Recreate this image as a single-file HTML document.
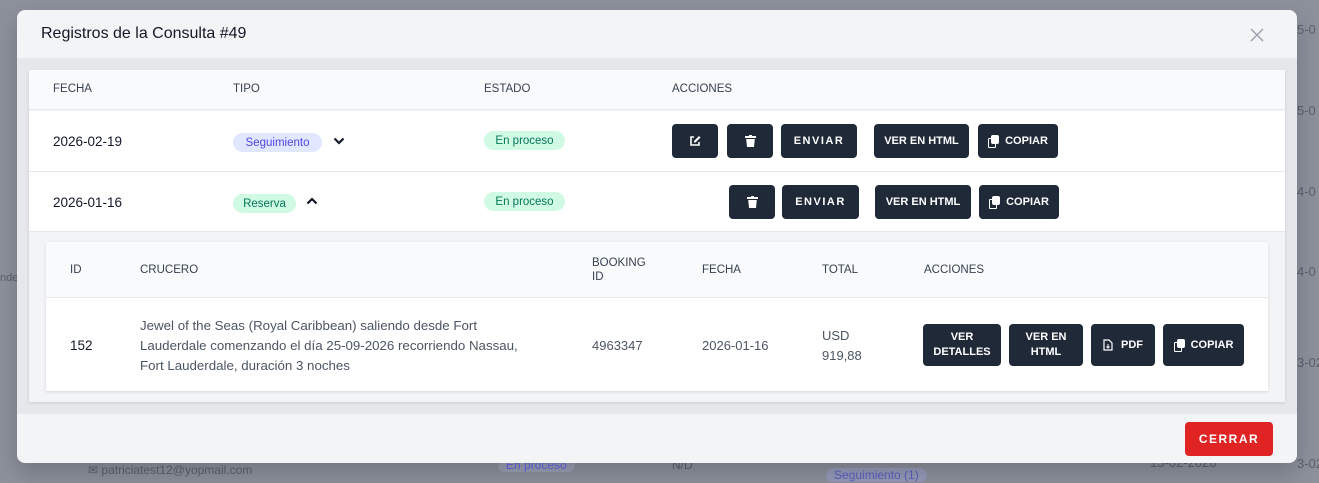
<!DOCTYPE html>
<html><head><meta charset="utf-8"><style>
*{box-sizing:border-box;margin:0;padding:0}
html,body{width:1319px;height:483px;overflow:hidden}
body{background:#8d919c;font-family:"Liberation Sans",sans-serif;position:relative;color:#111827}
.a{position:absolute;white-space:nowrap}
.bg{color:#5b6170;font-size:13px}
.m{left:17px;top:10px;width:1280px;height:453px;background:#f3f4f6;border-radius:8px;overflow:hidden;box-shadow:0 10px 25px rgba(0,0,0,.2)}
.th{font-size:11.5px;color:#374151;font-weight:500}
.btn{position:absolute;background:#1f2937;color:#fff;border-radius:4px;font-size:11px;font-weight:bold;display:flex;align-items:center;justify-content:center;text-align:center;line-height:15px;white-space:nowrap}
.badge{position:absolute;height:19px;border-radius:10px;font-size:11.5px;display:flex;align-items:center;justify-content:center}
.td{font-size:13.5px}
.gr{color:#4b5563;font-size:13px}
.cp{display:inline-block;width:11px;height:12px;position:relative;margin-right:6px}
.cp:before{content:"";position:absolute;left:0;top:3px;width:6px;height:8px;border:1.5px solid #fff;border-radius:1px}
.cp:after{content:"";position:absolute;left:3px;top:0;width:8px;height:9px;background:#fff;border-radius:2px}
</style></head><body>
<div class="a bg" style="left:1297px;top:22px">5-0</div>
<div class="a bg" style="left:1297px;top:103px">5-0</div>
<div class="a bg" style="left:1297px;top:184px">4-0</div>
<div class="a bg" style="left:1297px;top:264px">4-0</div>
<div class="a bg" style="left:0;top:272px;font-size:11px">nde</div>
<div class="a bg" style="left:1297px;top:355px">3-02</div>
<div class="a bg" style="left:1297px;top:456px">3-02</div>
<div class="a bg" style="left:88px;top:463px;font-size:12px">✉ patriciatest12@yopmail.com</div>
<div class="a bg" style="left:498px;top:458px;font-size:12px;color:#6366f1;background:#9aa0b5;padding:0 8px;border-radius:9px">En proceso</div>
<div class="a bg" style="left:672px;top:458px;font-size:12px">N/D</div>
<div class="a bg" style="left:826px;top:468px;font-size:12px;color:#5a5fc0;background:#959ab8;padding:0 8px;border-radius:9px">Seguimiento (1)</div>
<div class="a bg" style="left:1150px;top:455px">13-02-2026</div>

<div class="a m">
 <div class="a" style="left:24px;top:15px;font-size:16px;color:#111827">Registros de la Consulta #49</div>
 <svg class="a" style="left:1232px;top:17px" width="16" height="16" viewBox="0 0 16 16"><path d="M2 2L14 14M14 2L2 14" stroke="#9ca3af" stroke-width="1.5"/></svg>
 <div class="a" style="left:0;top:48px;width:1280px;height:356px;background:#e5e7eb"></div>
 <div class="a" style="left:12px;top:60px;width:1256px;height:332px;background:#f3f4f6;box-shadow:0 1px 3px rgba(0,0,0,.12)">
  <div class="a" style="left:0;top:0;width:1256px;height:40px;background:#f9fafb;border-bottom:1px solid #e5e7eb"></div>
  <div class="a th" style="left:24px;top:13px">FECHA</div>
  <div class="a th" style="left:204px;top:13px">TIPO</div>
  <div class="a th" style="left:455px;top:13px">ESTADO</div>
  <div class="a th" style="left:643px;top:13px">ACCIONES</div>
  <div class="a" style="left:0;top:41px;width:1256px;height:61px;background:#fff;border-bottom:1px solid #e5e7eb"></div>
  <div class="a" style="left:0;top:102px;width:1256px;height:60px;background:#fff;border-bottom:1px solid #e5e7eb"></div>
 </div>
</div>
<div class="a td" style="left:53px;top:134px">2026-02-19</div>
<div class="badge" style="left:233px;top:133px;width:89px;background:#e0e7ff;color:#4f46e5">Seguimiento</div>
<svg class="a" style="left:333px;top:136px" width="12" height="10" viewBox="0 0 12 10"><path d="M1.5 2.5L6 7L10.5 2.5" stroke="#111827" stroke-width="2.2" fill="none"/></svg>
<div class="badge" style="left:484px;top:131px;width:81px;background:#d1fae5;color:#047857">En proceso</div>
<div class="btn" style="left:672px;top:124px;width:46px;height:34px"><svg width="12" height="12" viewBox="0 0 12 12"><path d="M5 2H2v8h8V7" stroke="#fff" stroke-width="1.6" fill="none"/><path d="M10 1L5 6v1.5h1.5L11.5 2.5z" fill="#fff"/></svg></div>
<div class="btn" style="left:727px;top:124px;width:46px;height:34px"><svg width="11" height="12" viewBox="0 0 11 12"><rect x="0" y="1" width="11" height="2" fill="#fff"/><rect x="4" y="0" width="3" height="1.5" fill="#fff"/><path d="M1.2 4h8.6l-.8 8H2z" fill="#fff"/></svg></div>
<div class="btn" style="left:781px;top:124px;width:76px;height:34px;letter-spacing:1.5px">ENVIAR</div>
<div class="btn" style="left:874px;top:124px;width:95px;height:34px">VER EN HTML</div>
<div class="btn" style="left:978px;top:124px;width:80px;height:34px"><span class="cp"></span>COPIAR</div>

<div class="a td" style="left:53px;top:195px">2026-01-16</div>
<div class="badge" style="left:233px;top:194px;width:63px;background:#d1fae5;color:#047857">Reserva</div>
<svg class="a" style="left:306px;top:196px" width="12" height="10" viewBox="0 0 12 10"><path d="M1.5 7.5L6 3L10.5 7.5" stroke="#111827" stroke-width="2.2" fill="none"/></svg>
<div class="badge" style="left:484px;top:192px;width:81px;background:#d1fae5;color:#047857">En proceso</div>
<div class="btn" style="left:729px;top:185px;width:46px;height:34px"><svg width="11" height="12" viewBox="0 0 11 12"><rect x="0" y="1" width="11" height="2" fill="#fff"/><rect x="4" y="0" width="3" height="1.5" fill="#fff"/><path d="M1.2 4h8.6l-.8 8H2z" fill="#fff"/></svg></div>
<div class="btn" style="left:782px;top:185px;width:77px;height:34px;letter-spacing:1.5px">ENVIAR</div>
<div class="btn" style="left:875px;top:185px;width:96px;height:34px">VER EN HTML</div>
<div class="btn" style="left:979px;top:185px;width:80px;height:34px"><span class="cp"></span>COPIAR</div>

<div class="a" style="left:46px;top:242px;width:1222px;height:149px;background:#fff;box-shadow:0 1px 3px rgba(0,0,0,.12)">
 <div class="a" style="left:0;top:0;width:1222px;height:56px;background:#f9fafb;border-bottom:1px solid #e5e7eb"></div>
</div>
<div class="a th" style="left:70px;top:264px">ID</div>
<div class="a th" style="left:140px;top:264px">CRUCERO</div>
<div class="a th" style="left:592px;top:256px;line-height:14px">BOOKING<br>ID</div>
<div class="a th" style="left:702px;top:264px">FECHA</div>
<div class="a th" style="left:822px;top:264px">TOTAL</div>
<div class="a th" style="left:924px;top:264px">ACCIONES</div>
<div class="a td" style="left:70px;top:338px">152</div>
<div class="a gr" style="left:140px;top:316px;line-height:20px;font-size:13.3px">Jewel of the Seas (Royal Caribbean) saliendo desde Fort<br>Lauderdale comenzando el día 25-09-2026 recorriendo Nassau,<br>Fort Lauderdale, duración 3 noches</div>
<div class="a gr" style="left:592px;top:338px">4963347</div>
<div class="a gr" style="left:702px;top:338px">2026-01-16</div>
<div class="a gr" style="left:822px;top:326px;line-height:20px">USD<br>919,88</div>
<div class="btn" style="left:923px;top:324px;width:78px;height:42px">VER<br>DETALLES</div>
<div class="btn" style="left:1009px;top:324px;width:74px;height:42px">VER EN<br>HTML</div>
<div class="btn" style="left:1091px;top:324px;width:64px;height:42px"><svg width="10" height="12" viewBox="0 0 10 12" style="margin-right:8px"><path d="M1 1h5l3 3v7H1z" stroke="#fff" stroke-width="1.2" fill="none"/><path d="M5 5v4M3.5 7.5L5 9l1.5-1.5" stroke="#fff" stroke-width="1"/></svg>PDF</div>
<div class="btn" style="left:1163px;top:324px;width:81px;height:42px"><span class="cp"></span>COPIAR</div>

<div class="btn" style="left:1185px;top:422px;width:88px;height:34px;background:#e02424;letter-spacing:1.5px;font-size:12px">CERRAR</div>
</body></html>
